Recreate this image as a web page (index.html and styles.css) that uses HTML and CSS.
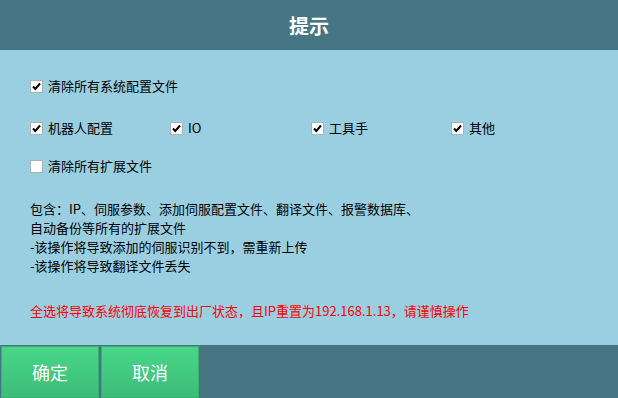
FILE: index.html
```html
<!DOCTYPE html>
<html>
<head>
<meta charset="utf-8">
<link rel="stylesheet" href="styles.css">
</head>
<body>
<div class="dialog">
  <div class="header">提示</div>
  <div class="content">
    <label class="row first"><input type="checkbox" checked><span>清除所有系统配置文件</span></label>
    <div class="grid">
      <label class="item"><input type="checkbox" checked><span>机器人配置</span></label>
      <label class="item"><input type="checkbox" checked><span>IO</span></label>
      <label class="item"><input type="checkbox" checked><span>工具手</span></label>
      <label class="item"><input type="checkbox" checked><span>其他</span></label>
    </div>
    <label class="row"><input type="checkbox"><span>清除所有扩展文件</span></label>
    <div class="desc">
      <p>包含：IP、伺服参数、添加伺服配置文件、翻译文件、报警数据库、</p>
      <p>自动备份等所有的扩展文件</p>
      <p>-该操作将导致添加的伺服识别不到，需重新上传</p>
      <p>-该操作将导致翻译文件丢失</p>
    </div>
    <p class="warn">全选将导致系统彻底恢复到出厂状态，且IP重置为192.168.1.13，请谨慎操作</p>
  </div>
  <div class="footer">
    <button class="btn">确定</button>
    <button class="btn">取消</button>
  </div>
</div>
</body>
</html>
```
FILE: styles.css
```css
* { box-sizing: border-box; }
html, body { margin: 0; padding: 0; }
body {
  width: 618px;
  height: 398px;
  overflow: hidden;
  font-family: "Noto Sans CJK SC", "Noto Sans", sans-serif;
  font-size: 13px;
  color: #000;
}
.dialog {
  display: flex;
  flex-direction: column;
  height: 398px;
  background: #9acfe2;
}
.header {
  height: 50px;
  background: #467583;
  color: #fff;
  font-size: 20px;
  font-weight: bold;
  display: flex;
  align-items: center;
  justify-content: center;
}
.content {
  flex: 1;
  padding: 27px 30px 0 30px;
}
.row, .item {
  display: flex;
  align-items: center;
  height: 18px;
  line-height: 18px;
}
input[type="checkbox"] {
  appearance: none;
  -webkit-appearance: none;
  width: 13px;
  height: 13px;
  margin: 0 5px 0 0;
  background: #fff;
  border: 1px solid #a9b4b8;
  border-radius: 0;
  flex: none;
}
input[type="checkbox"]:checked {
  background: #fff url("data:image/svg+xml,%3Csvg xmlns='http://www.w3.org/2000/svg' width='11' height='11' viewBox='0 0 11 11'%3E%3Cpath d='M2 5.5 L4.3 8 L9 2.5' fill='none' stroke='%23000' stroke-width='2'/%3E%3C/svg%3E") no-repeat center;
}
.grid {
  display: grid;
  grid-template-columns: 140px 141px 140px 140px;
  margin-top: 24px;
}
.grid + .row { margin-top: 20px; }
.desc {
  margin-top: 24px;
}
.desc p {
  margin: 0;
  line-height: 19px;
}
.warn {
  margin: 26px 0 0 0;
  color: #ff0000;
  line-height: 19px;
}
.footer {
  height: 53px;
  background: #467583;
  display: flex;
  padding: 1px 0 0 1px;
  gap: 2px;
}
.btn {
  width: 98px;
  height: 52px;
  border: 1px solid #37b06f;
  background: linear-gradient(#48d68a, #3dbd78);
  color: #fff;
  font-family: "Noto Sans CJK SC", sans-serif;
  font-size: 18px;
  padding: 0;
}
```
